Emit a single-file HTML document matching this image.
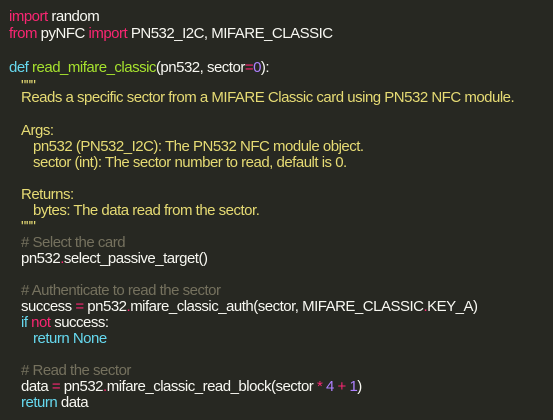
<!DOCTYPE html>
<html><head><meta charset="utf-8"><style>
html,body{margin:0;padding:0;}
body{width:553px;height:420px;background:#272822;overflow:hidden;position:relative;font-family:"Liberation Sans",sans-serif;font-size:15px;letter-spacing:-0.5px;color:#f8f8f2;}
.l{position:absolute;white-space:pre;line-height:18px;height:18px;}
.k{color:#f92672}.b{color:#66d9ef}.f{color:#a6e22e}.s{color:#e6db74}.c{color:#75715e}.n{color:#ae81ff}
</style></head><body>
<div class="l" style="left:9px;top:8px"><span class="k">import</span> random</div>
<div class="l" style="left:9px;top:25px"><span class="k">from</span> pyNFC <span class="k">import</span> PN532_I2C, MIFARE_CLASSIC</div>
<div class="l" style="left:9px;top:59px"><span class="b">def</span> <span class="f">read_mifare_classic</span>(pn532, sector<span class="k">=</span><span class="n">0</span>):</div>
<div class="l s" style="left:21px;top:77px">"""</div>
<div class="l s" style="left:21px;top:89px">Reads a specific sector from a MIFARE Classic card using PN532 NFC module.</div>
<div class="l s" style="left:21px;top:122px">Args:</div>
<div class="l s" style="left:33px;top:138px">pn532 (PN532_I2C): The PN532 NFC module object.</div>
<div class="l s" style="left:33px;top:154px">sector (int): The sector number to read, default is 0.</div>
<div class="l s" style="left:21px;top:186px">Returns:</div>
<div class="l s" style="left:33px;top:202px">bytes: The data read from the sector.</div>
<div class="l s" style="left:21px;top:218px">"""</div>
<div class="l c" style="left:21px;top:234px"># Select the card</div>
<div class="l" style="left:21px;top:250px">pn532<span class="k">.</span>select_passive_target()</div>
<div class="l c" style="left:21px;top:282px"># Authenticate to read the sector</div>
<div class="l" style="left:21px;top:298px">success <span class="k">=</span> pn532<span class="k">.</span>mifare_classic_auth(sector, MIFARE_CLASSIC<span class="k">.</span>KEY_A)</div>
<div class="l" style="left:21px;top:314px"><span class="b">if</span> <span class="k">not</span> success:</div>
<div class="l" style="left:33px;top:330px"><span class="b">return None</span></div>
<div class="l c" style="left:21px;top:362px"># Read the sector</div>
<div class="l" style="left:21px;top:378px">data <span class="k">=</span> pn532<span class="k">.</span>mifare_classic_read_block(sector <span class="k">*</span> <span class="n">4</span> <span class="k">+</span> <span class="n">1</span>)</div>
<div class="l" style="left:21px;top:394px"><span class="b">return</span> data</div>
</body></html>
